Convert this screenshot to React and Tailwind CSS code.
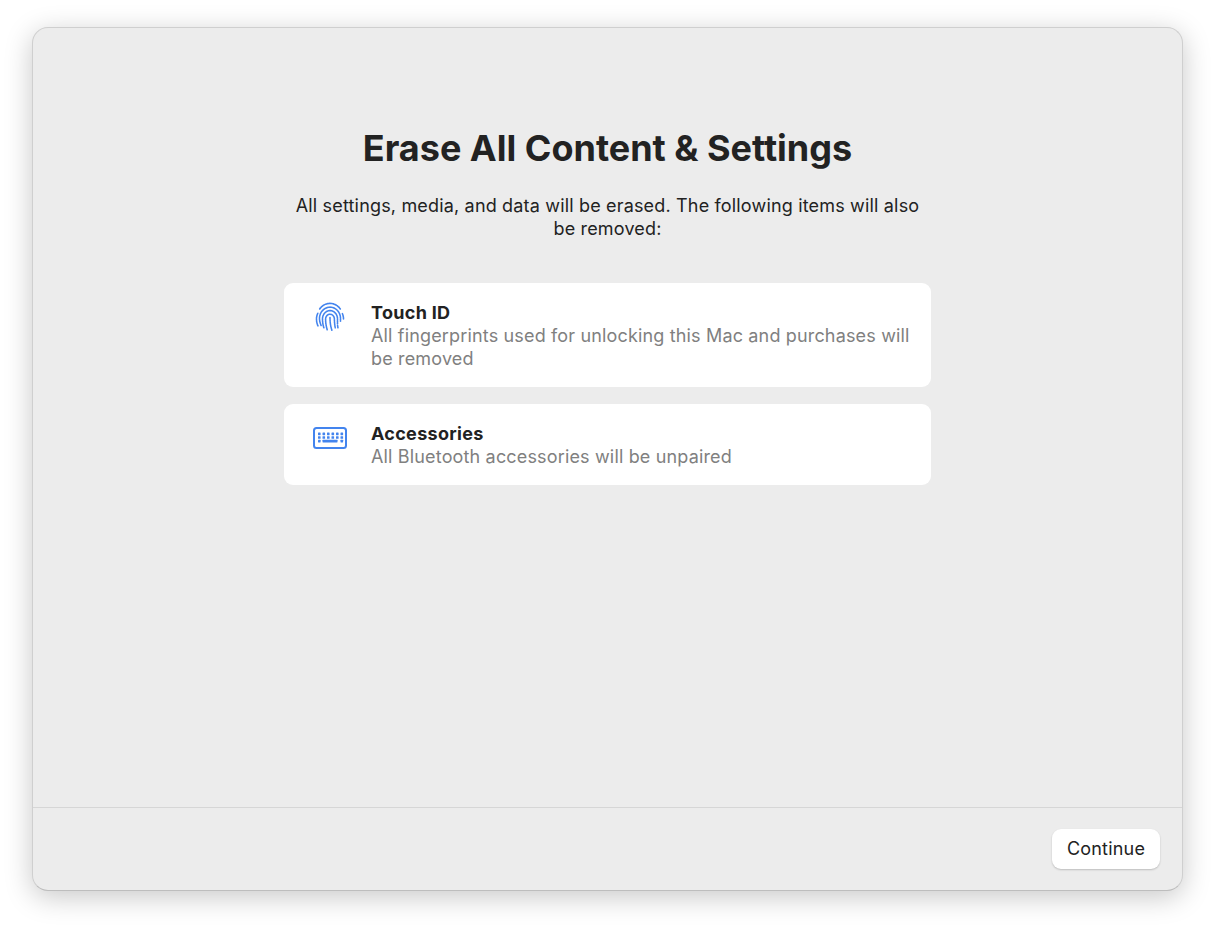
import React from 'react';

const FingerprintIcon = () => (
  <svg width="30" height="30" viewBox="0 0 32 32" fill="none" stroke="#4384ee" strokeWidth="1.7" strokeLinecap="round" strokeDasharray="1.5 0.6">
    <path d="M5 7.500C7.500 3.800 11.500 1.500 16 1.500s8.500 2.300 11 6" />
    <path d="M3 12c-1 2-1.400 4-1.400 6 0 3 .6 5.500 1.600 7.500" />
    <path d="M30.400 18c0-2.200-.5-4.300-1.400-6" />
    <path d="M6.500 25c-1-2.500-1.700-4.800-1.700-7.500C4.800 11 9.800 5.500 16 5.500s11.200 5.500 11.200 12v3" />
    <path d="M9.500 27.500c-1-3-1.500-6-1.500-9.500 0-4.800 3.500-8.800 8-8.800s8 4 8 8.800v6" />
    <path d="M13 29.500c-1-3.500-1.700-7-1.700-11.200 0-2.900 2-5.300 4.700-5.300s4.700 2.400 4.700 5.300c0 3 .3 6 .9 9.200" />
    <path d="M16 16.500c0 5 .6 9.500 2 13.500" />
    <path d="M24.500 27.500c-.2-.9-.3-1.700-.4-2.500" />
  </svg>
);

const KeyboardIcon = () => {
  const dots = [];
  for (let row = 0; row < 3; row++) {
    for (let col = 0; col < 6; col++) {
      if (row === 2 && col > 0 && col < 5) continue;
      dots.push(<rect key={`${row}-${col}`} x={5 + col * 4.5} y={5.6 + row * 3.6} width="2.600" height="2.600" rx="0.400" fill="#4384ee" />);
    }
  }
  return (
    <svg width="34" height="22" viewBox="0 0 34 22" fill="none">
      <rect x="1" y="1" width="32" height="20" rx="2.500" stroke="#4384ee" strokeWidth="2" />
      {dots}
      <rect x="9.500" y="12.800" width="15" height="2.600" rx="0.400" fill="#4384ee" />
    </svg>
  );
};

const items = [
  {
    title: 'Touch ID',
    text: 'All fingerprints used for unlocking this Mac and purchases will be removed',
    icon: <FingerprintIcon />,
    iconClass: 'pl-[31px] pt-[19px] w-[87px]',
    cardClass: 'h-[104px]',
  },
  {
    title: 'Accessories',
    text: 'All Bluetooth accessories will be unpaired',
    icon: <KeyboardIcon />,
    iconClass: 'pl-[29px] pt-[23px] w-[87px]',
    cardClass: 'h-[81px]',
  },
];

export default function App() {
  return (
    <div className="w-[1216px] h-[929px] bg-white pt-[27px] pl-[32px] overflow-hidden font-['Inter',sans-serif]">
      <div className="w-[1151px] h-[864px] bg-[#ececec] rounded-[16px] border border-[#cfcfcf] border-b-[#bdbdbd] shadow-[0_6px_28px_rgba(0,0,0,0.22)] flex flex-col">
        {/* Content */}
        <div className="flex-1 flex flex-col items-center pt-[98px]">
          <h1 className="text-[36px] leading-[44px] font-bold text-[#222222]">
            Erase All Content &amp; Settings
          </h1>
          <p className="mt-[24px] w-[640px] text-center text-[18px] leading-[23px] tracking-[0.17px] text-[#222222]">
            All settings, media, and data will be erased. The following items will also be removed:
          </p>
          <div className="mt-[43px] w-[647px] flex flex-col gap-[17px]">
            {items.map((item) => (
              <div key={item.title} className={`bg-white rounded-[9px] flex ${item.cardClass}`}>
                <div className={`shrink-0 ${item.iconClass}`}>{item.icon}</div>
                <div className="pt-[18px] pr-[20px]">
                  <div className="text-[18px] leading-[23px] tracking-[0.3px] font-bold text-[#222222]">{item.title}</div>
                  <div className="text-[18px] leading-[23px] tracking-[0.16px] text-[#808080]">{item.text}</div>
                </div>
              </div>
            ))}
          </div>
        </div>

        {/* Footer */}
        <div className="h-[83px] border-t border-[#d6d6d6] flex items-start justify-end pt-[21px] pr-[22px]">
          <button className="w-[108px] h-[40px] pb-[2px] bg-white rounded-[9px] text-[18px] tracking-[0.2px] text-[#222222] shadow-[0_1px_2px_rgba(0,0,0,0.2)]">
            Continue
          </button>
        </div>
      </div>
    </div>
  );
}
